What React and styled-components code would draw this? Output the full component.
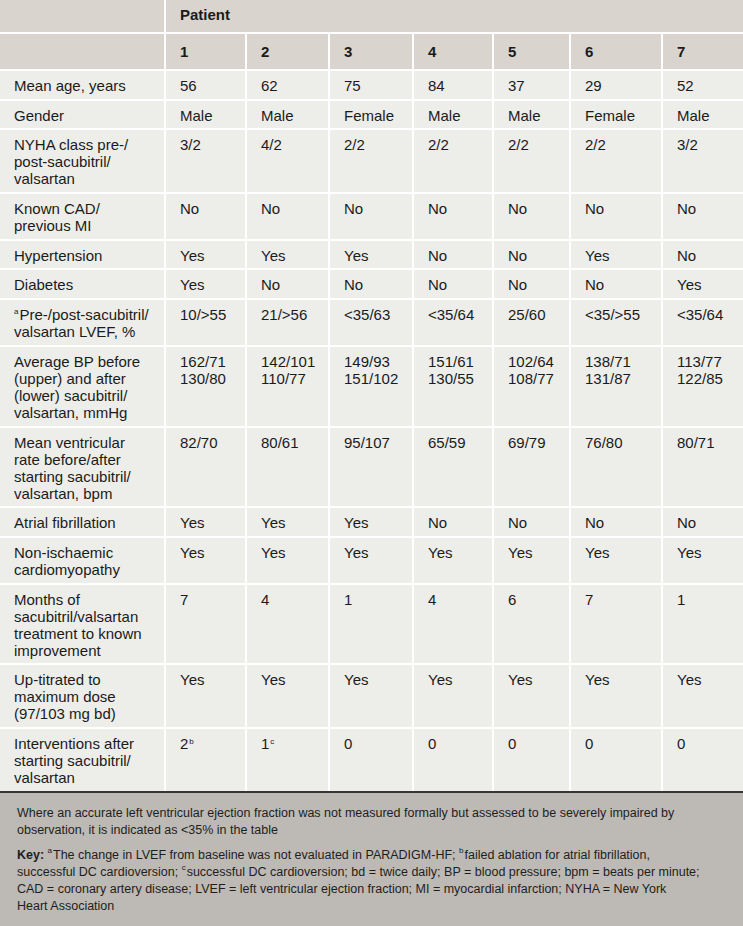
import React from 'react';
import styled, { createGlobalStyle } from 'styled-components';

const GlobalStyle = createGlobalStyle`
  body {
    margin: 0;
    background: #bdb9b4;
    font-family: "Liberation Sans", Arial, sans-serif;
    color: #1b1b1b;
  }
`;

const Page = styled.div`
  width: 743px;
`;

const Table = styled.div`
  display: grid;
  grid-template-columns: 164px 79px 81px 82px 78px 75px 90px 1fr;
  gap: 2px;
  background: #ffffff;
`;

const HeadCell = styled.div`
  background: #d9d4ce;
  font-size: 15px;
  font-weight: bold;
  line-height: 17px;
  padding: ${p => (p.$top ? '6px 14px 9px' : '9px 14px 9px')};
  grid-column: ${p => p.$span || 'auto'};
`;

const Cell = styled.div`
  background: #ededea;
  font-size: 15px;
  line-height: 17px;
  padding: 6px 6px 4.7px 14px;
`;

const Line = styled.div`
  white-space: nowrap;
`;

const Sup = styled.sup`
  font-size: 8px;
  line-height: 0;
  vertical-align: ${p => (p.$high ? '6px' : '5px')};
  margin-left: ${p => (p.$gap ? '1px' : '0')};
  margin-right: ${p => (p.$high ? '1px' : '0')};
`;

const Footnote = styled.div`
  background: #bdb9b4;
  border-top: 2px solid #363636;
  padding: 12px 14px 10px 17px;
  font-size: 12.5px;
  line-height: 17px;
  color: #1e1e1e;
`;

const Para = styled.p`
  margin: 0 0 8px;
  &:last-child {
    margin-bottom: 0;
  }
`;

const rows = [
  { label: 'Mean age, years', values: ['56', '62', '75', '84', '37', '29', '52'] },
  { label: 'Gender', values: ['Male', 'Male', 'Female', 'Male', 'Male', 'Female', 'Male'] },
  { label: 'NYHA class pre-/\npost-sacubitril/\nvalsartan', values: ['3/2', '4/2', '2/2', '2/2', '2/2', '2/2', '3/2'] },
  { label: 'Known CAD/\nprevious MI', values: ['No', 'No', 'No', 'No', 'No', 'No', 'No'] },
  { label: 'Hypertension', values: ['Yes', 'Yes', 'Yes', 'No', 'No', 'Yes', 'No'] },
  { label: 'Diabetes', values: ['Yes', 'No', 'No', 'No', 'No', 'No', 'Yes'] },
  { sup: 'a', label: 'Pre-/post-sacubitril/\nvalsartan LVEF, %', values: ['10/>55', '21/>56', '<35/63', '<35/64', '25/60', '<35/>55', '<35/64'] },
  {
    label: 'Average BP before\n(upper) and after\n(lower) sacubitril/\nvalsartan, mmHg',
    values: ['162/71\n130/80', '142/101\n110/77', '149/93\n151/102', '151/61\n130/55', '102/64\n108/77', '138/71\n131/87', '113/77\n122/85'],
  },
  { label: 'Mean ventricular\nrate before/after\nstarting sacubitril/\nvalsartan, bpm', values: ['82/70', '80/61', '95/107', '65/59', '69/79', '76/80', '80/71'] },
  { label: 'Atrial fibrillation', values: ['Yes', 'Yes', 'Yes', 'No', 'No', 'No', 'No'] },
  { label: 'Non-ischaemic\ncardiomyopathy', values: ['Yes', 'Yes', 'Yes', 'Yes', 'Yes', 'Yes', 'Yes'] },
  { label: 'Months of\nsacubitril/valsartan\ntreatment to known\nimprovement', values: ['7', '4', '1', '4', '6', '7', '1'] },
  { label: 'Up-titrated to\nmaximum dose\n(97/103 mg bd)', values: ['Yes', 'Yes', 'Yes', 'Yes', 'Yes', 'Yes', 'Yes'] },
  {
    label: 'Interventions after\nstarting sacubitril/\nvalsartan',
    values: [['2', 'b'], ['1', 'c'], '0', '0', '0', '0', '0'],
  },
];

function Lines({ text, sup }) {
  return text.split('\n').map((t, i) => (
    <Line key={i}>
      {i === 0 && sup && <Sup $high>{sup}</Sup>}
      {t}
    </Line>
  ));
}

function Value({ v }) {
  if (Array.isArray(v)) {
    return (
      <Cell>
        {v[0]}
        <Sup $gap>{v[1]}</Sup>
      </Cell>
    );
  }
  return (
    <Cell>
      <Lines text={v} />
    </Cell>
  );
}

export default function App() {
  return (
    <Page>
      <GlobalStyle />
      <Table>
        <HeadCell $top />
        <HeadCell $top $span="2 / span 7">Patient</HeadCell>
        <HeadCell />
        {[1, 2, 3, 4, 5, 6, 7].map(n => (
          <HeadCell key={n}>{n}</HeadCell>
        ))}
        {rows.map((r, i) => (
          <React.Fragment key={i}>
            <Cell>
              <Lines text={r.label} sup={r.sup} />
            </Cell>
            {r.values.map((v, j) => (
              <Value key={j} v={v} />
            ))}
          </React.Fragment>
        ))}
      </Table>
      <Footnote>
        <Para>
          Where an accurate left ventricular ejection fraction was not measured formally but assessed to be severely impaired by
          <br />
          observation, it is indicated as &lt;35% in the table
        </Para>
        <Para>
          <b>Key: </b>
          <Sup $high>a</Sup>The change in LVEF from baseline was not evaluated in PARADIGM-HF; <Sup $high>b</Sup>failed ablation for atrial fibrillation,
          <br />
          successful DC cardioversion; <Sup $high>c</Sup>successful DC cardioversion; bd = twice daily; BP = blood pressure; bpm = beats per minute;
          <br />
          CAD = coronary artery disease; LVEF = left ventricular ejection fraction; MI = myocardial infarction; NYHA = New York
          <br />
          Heart Association
        </Para>
      </Footnote>
    </Page>
  );
}
